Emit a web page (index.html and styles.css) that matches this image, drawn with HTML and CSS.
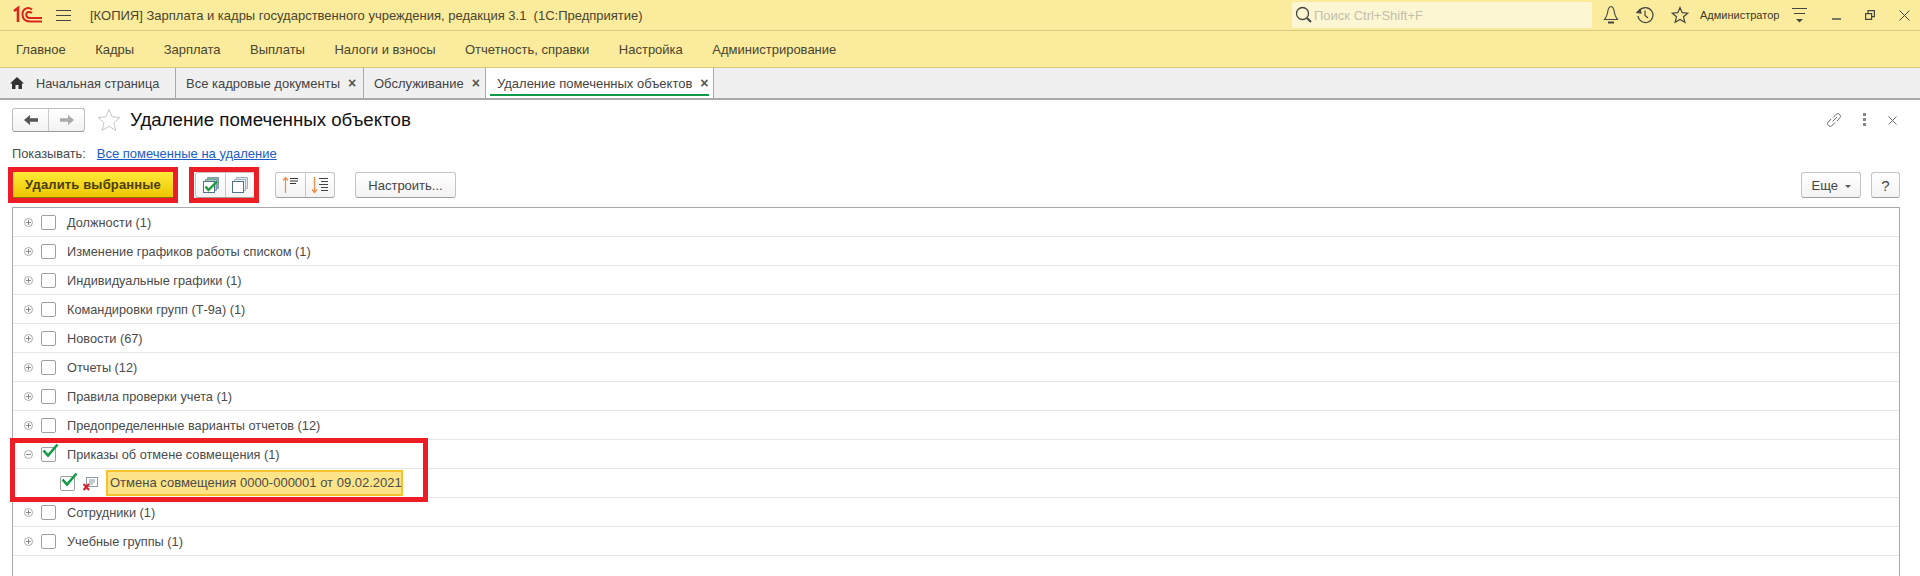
FILE: index.html
```html
<!DOCTYPE html>
<html lang="ru">

<head>
  <meta charset="UTF-8">
  <title>Удаление помеченных объектов</title>
  <link rel="stylesheet" href="styles.css">
</head>

<body>
  <div class="top-bar">
    <svg class="logo" width="30" height="20" viewBox="0 0 30 20" fill="none" stroke="#d9251d">
      <path d="M1 6 L5 3 V17" stroke-width="2.6"/>
      <path d="M19 4.500 C15 1.500 9.500 3.500 9.500 9 C9.500 14 12 16.500 17 16.500 H29" stroke-width="2"/>
      <path d="M19 8 C16.500 6 13.200 7 13.200 9.600 C13.200 12 15 13 17 13 H29" stroke-width="2"/>
    </svg>
    <svg class="burger" width="15" height="13" viewBox="0 0 15 13" stroke="#444" stroke-width="1.2">
      <path d="M0 1.5H15M0 6.5H15M0 11.5H15"/>
    </svg>
    <div class="app-title">[КОПИЯ] Зарплата и кадры государственного учреждения, редакция 3.1&nbsp; (1С:Предприятие)</div>
    <div class="search">
      <svg width="17" height="18" viewBox="0 0 17 18" fill="none" stroke="#444" stroke-width="1.3">
        <circle cx="7.5" cy="7.5" r="6"/>
        <path d="M12 12l4 4" stroke-width="2"/>
      </svg>
      <span>Поиск Ctrl+Shift+F</span>
    </div>
    <div class="top-icons">
      <svg width="16" height="20" viewBox="0 0 16 20" fill="none" stroke="#444" stroke-width="1.1">
        <path d="M8 1.500C5.500 1.500 5 4 4.500 8C4 11 2.500 13 1.500 14.500H14.500C13.500 13 12 11 11.500 8C11 4 10.500 1.500 8 1.500Z"/>
        <path d="M5 17.500H11" stroke-width="2"/>
      </svg>
      <svg width="18" height="18" viewBox="0 0 18 18" fill="none" stroke="#444" stroke-width="1.2">
        <path d="M3.500 4.500A7.500 7.500 0 1 1 2 10"/>
        <path d="M1 6.500L4 3.500L5 7Z" fill="#444"/>
        <path d="M9 4.500V9.500L12 12"/>
      </svg>
      <svg width="18" height="18" viewBox="0 0 18 18" fill="none" stroke="#444" stroke-width="1.2">
        <path d="M9 1.500L11.200 6.700L16.800 7.200L12.500 10.800L13.900 16.300L9 13.400L4.100 16.300L5.500 10.800L1.200 7.200L6.800 6.700Z"/>
      </svg>
    </div>
    <div class="user-name">Администратор</div>
    <svg class="user-menu" width="15" height="16" viewBox="0 0 15 16" stroke="#444" stroke-width="1.2">
      <path d="M0 1.500H15M2 6.500H13"/>
      <path d="M4 12H11L7.500 15.500Z" fill="#444" stroke="none"/>
    </svg>
    <div class="win-icons">
      <svg width="10" height="10" viewBox="0 0 10 10" stroke="#444" stroke-width="1.4"><path d="M1 9H10"/></svg>
      <svg width="10" height="10" viewBox="0 0 10 10" fill="none" stroke="#444" stroke-width="1.2"><path d="M.6 3.600H6.600V9.400H.6ZM3 3.500V.6H9.400V6.600H6.600"/></svg>
      <svg width="11" height="11" viewBox="0 0 11 11" stroke="#444" stroke-width="1"><path d="M.5 .5L10.500 10.500M10.500 .5L.5 10.500"/></svg>
    </div>
  </div>

  <div class="main-menu">
    <a>Главное</a>
    <a>Кадры</a>
    <a>Зарплата</a>
    <a>Выплаты</a>
    <a>Налоги и взносы</a>
    <a>Отчетность, справки</a>
    <a>Настройка</a>
    <a>Администрирование</a>
  </div>

  <div class="tabs">
    <div class="tab tab-home">
      <svg width="14" height="12" viewBox="0 0 14 12" fill="#333"><path d="M7 0L14 6.500H12V12H8.500V8H5.500V12H2V6.500H0Z"/></svg>
      <span>Начальная страница</span>
    </div>
    <div class="tab tab-docs"><span>Все кадровые документы</span><i>×</i></div>
    <div class="tab tab-service"><span>Обслуживание</span><i>×</i></div>
    <div class="tab tab-active"><span>Удаление помеченных объектов</span><i>×</i></div>
  </div>

  <div class="form">
    <div class="form-head">
      <div class="nav-buttons">
        <button>
          <svg width="14" height="10" viewBox="0 0 14 10" fill="#555"><path d="M0 5L6 0V3.300H14V6.700H6V10Z"/></svg>
        </button>
        <button>
          <svg width="14" height="10" viewBox="0 0 14 10" fill="#aaa"><path d="M14 5L8 0V3.300H0V6.700H8V10Z"/></svg>
        </button>
      </div>
      <svg class="fav" width="24" height="24" viewBox="0 0 24 24" fill="#fff" stroke="#c8c8c8" stroke-width="1">
        <path d="M12 1.500L15.100 8.800L23 9.500L17 14.700L18.800 22.400L12 18.300L5.200 22.400L7 14.700L1 9.500L8.900 8.800Z"/>
      </svg>
      <h1>Удаление помеченных объектов</h1>
      <div class="form-tools">
        <svg width="16" height="16" viewBox="0 0 16 16" fill="none" stroke="#666" stroke-width="1">
          <path d="M6.500 9.500L11 5M5 7L2 10.500C.5 12.500 3.500 15.500 5.500 14L9 10.500M7 5.500L10.500 2C12.500 .5 15.500 3.500 14 5.500L11 9"/>
        </svg>
        <svg width="4" height="14" viewBox="0 0 4 14" fill="#888">
          <rect x="0" y="0" width="3" height="3"/><rect x="0" y="5" width="3" height="3"/><rect x="0" y="10" width="3" height="3"/>
        </svg>
        <svg width="9" height="9" viewBox="0 0 9 9" stroke="#666" stroke-width="1"><path d="M.5 .5L8.500 8.500M8.500 .5L.5 8.500"/></svg>
      </div>
    </div>

    <div class="filter-row">
      <span>Показывать:</span>
      <a href="#">Все помеченные на удаление</a>
    </div>

    <div class="command-bar">
      <button class="btn-main">Удалить выбранные</button>
      <div class="btn-group group-check">
        <button>
          <svg width="18" height="18" viewBox="0 0 18 18" fill="none" stroke="#7c9aa8">
            <path d="M5.500 3.500V1.500H16.500V12.500H14.500" fill="#7fb98f"/>
            <path d="M3.500 5.500V3.500H14.500V14.500H12.500" fill="#a5d0ac"/>
            <rect x="1.500" y="5.500" width="11" height="11" fill="#fff" stroke="#4d7388"/>
            <path d="M3.500 10.500L6.500 14L15 5.500" stroke="#1f9a3c" stroke-width="2.4"/>
          </svg>
        </button>
        <button>
          <svg width="18" height="18" viewBox="0 0 18 18" fill="none" stroke="#9fb3bf">
            <path d="M5.500 3.500V1.500H16.500V12.500H14.500" fill="#dfe6ea"/>
            <path d="M3.500 5.500V3.500H14.500V14.500H12.500" fill="#eef2f4"/>
            <rect x="1.500" y="5.500" width="11" height="11" fill="#fff" stroke="#4d7388"/>
          </svg>
        </button>
      </div>
      <div class="btn-group group-sort">
        <button>
          <svg width="18" height="18" viewBox="0 0 18 18" fill="none">
            <path d="M3.500 17V2M1 4.500L3.500 1.500L6 4.500" stroke="#ee8a45" stroke-width="1.2"/>
            <path d="M8 2.500H16M8 5H16M8 7.500H14" stroke="#333" stroke-width="1.2"/>
          </svg>
        </button>
        <button>
          <svg width="18" height="18" viewBox="0 0 18 18" fill="none">
            <path d="M3.500 1V16M1 13.500L3.500 16.500L6 13.500" stroke="#ee8a45" stroke-width="1.2"/>
            <path d="M8 2.500H17M10 5.500H17M8 8.500H17M10 11.500H17M10 14.500H17" stroke="#444" stroke-width="1"/>
          </svg>
        </button>
      </div>
      <button class="btn btn-setup">Настроить...</button>
      <button class="btn btn-more">Еще <b class="caret"></b></button>
      <button class="btn btn-help">?</button>
    </div>

    <div class="tree">
      <div class="row"><b class="exp"></b><b class="chk"></b><span>Должности (1)</span></div>
      <div class="row"><b class="exp"></b><b class="chk"></b><span>Изменение графиков работы списком (1)</span></div>
      <div class="row"><b class="exp"></b><b class="chk"></b><span>Индивидуальные графики (1)</span></div>
      <div class="row"><b class="exp"></b><b class="chk"></b><span>Командировки групп (Т-9а) (1)</span></div>
      <div class="row"><b class="exp"></b><b class="chk"></b><span>Новости (67)</span></div>
      <div class="row"><b class="exp"></b><b class="chk"></b><span>Отчеты (12)</span></div>
      <div class="row"><b class="exp"></b><b class="chk"></b><span>Правила проверки учета (1)</span></div>
      <div class="row"><b class="exp"></b><b class="chk"></b><span>Предопределенные варианты отчетов (12)</span></div>
      <div class="row">
        <b class="exp exp-open"></b>
        <b class="chk"><svg width="17" height="15" viewBox="0 0 17 15" fill="none" stroke="#129a44" stroke-width="2.6"><path d="M1.500 7.500L6 12.500L15.500 1.500"/></svg></b>
        <span>Приказы об отмене совмещения (1)</span>
      </div>
      <div class="row row-child">
        <b class="chk"><svg width="17" height="15" viewBox="0 0 17 15" fill="none" stroke="#129a44" stroke-width="2.6"><path d="M1.500 7.500L6 12.500L15.500 1.500"/></svg></b>
        <svg class="doc-icon" width="15" height="15" viewBox="0 0 15 15" fill="none">
          <rect x="3.500" y="1.500" width="11" height="9" fill="#fff" stroke="#8a9aa5"/>
          <path d="M6 4H12M6 6H12M6 8H10" stroke="#8a9aa5"/>
          <path d="M.5 8L6 14M6 8L.5 14" stroke="#d8202a" stroke-width="2.2"/>
        </svg>
        <span class="selected">Отмена совмещения 0000-000001 от 09.02.2021</span>
      </div>
      <div class="row"><b class="exp"></b><b class="chk"></b><span>Сотрудники (1)</span></div>
      <div class="row"><b class="exp"></b><b class="chk"></b><span>Учебные группы (1)</span></div>
    </div>
  </div>

  <!-- красные рамки поверх скриншота -->
  <div class="mark mark-delete"></div>
  <div class="mark mark-check"></div>
  <div class="mark mark-rows"></div>
</body>

</html>
```

FILE: styles.css
```css
* {
  margin: 0;
  padding: 0;
  box-sizing: border-box;
}

html,
body {
  height: 576px;
  overflow: hidden;
}

body {
  position: relative;
  background: #fff;
  font-family: "Liberation Sans", Arial, sans-serif;
  font-size: 13px;
  color: #4b4b4b;
}

button {
  font-family: inherit;
}

/* верхняя строка */
.top-bar {
  height: 31px;
  display: flex;
  align-items: center;
  background: #fbeb9c;
  border-bottom: 1px solid #d9c97f;
  padding-left: 13px;
}

.burger {
  margin-left: 13px;
}

.app-title {
  margin-left: 19px;
  width: 1202px;
  color: #4a4530;
  font-size: 13px;
}

.search {
  width: 300px;
  height: 26px;
  display: flex;
  align-items: center;
  gap: 2px;
  background: #fdf6d2;
  border-radius: 2px;
  padding-left: 3px;
  color: #c4c0ac;
  font-size: 13px;
}

.top-icons {
  display: flex;
  align-items: center;
  gap: 17px;
  margin-left: 11px;
}

.user-name {
  margin-left: 11px;
  width: 92px;
  font-size: 11px;
  color: #3e3a28;
}

.win-icons {
  display: flex;
  align-items: center;
  gap: 24px;
  margin-left: 24px;
}

.user-menu {
  flex: none;
}

/* меню разделов */
.main-menu {
  height: 37px;
  display: flex;
  align-items: center;
  gap: 29.5px;
  padding-left: 16px;
  background: #fbeb9c;
  border-bottom: 1px solid #d9c97f;
  color: #4a4530;
}

.main-menu a {
  cursor: pointer;
}

/* вкладки */
.tabs {
  height: 32px;
  display: flex;
  background: #f0f0f0;
  border-bottom: 2px solid #a9a9a9;
}

.tab {
  display: flex;
  align-items: center;
  height: 30px;
  border-right: 1px solid #a9a9a9;
  color: #444;
  white-space: nowrap;
}

.tab svg {
  flex: none;
}

.tab i {
  font-style: normal;
  font-weight: bold;
  font-size: 14px;
  color: #555;
  margin-left: 8px;
}

.tab-home {
  width: 176px;
  padding-left: 10px;
  gap: 12px;
  font-size: 12.75px;
}

.tab-docs {
  width: 188px;
  padding-left: 10px;
}

.tab-service {
  width: 122px;
  padding-left: 10px;
}

.tab-active {
  width: 228px;
  padding-left: 11px;
  background: #fff;
  position: relative;
}

.tab-active::after {
  content: "";
  position: absolute;
  left: 4px;
  right: 4px;
  bottom: 2px;
  height: 2px;
  background: #0f9a4a;
}

/* форма */
.form {
  padding: 0 20px 0 12px;
}

.form-head {
  height: 40px;
  display: flex;
  align-items: center;
}

.nav-buttons {
  display: flex;
  width: 73px;
  height: 24px;
  border: 1px solid #bdbdbd;
  border-bottom-color: #9a9a9a;
  border-radius: 3px;
  background: linear-gradient(#fff, #f2f2f2);
}

.nav-buttons button {
  flex: 1;
  border: 0;
  background: none;
}

.nav-buttons button+button {
  border-left: 1px solid #c8c8c8;
}

.fav {
  margin-left: 12px;
}

h1 {
  margin-left: 9px;
  font-size: 18.7px;
  font-weight: normal;
  color: #111;
}

.form-tools {
  margin-left: auto;
  display: flex;
  align-items: center;
  gap: 21px;
  padding-right: 3px;
}

.filter-row {
  height: 26px;
  display: flex;
  align-items: center;
  gap: 11px;
  font-size: 12.8px;
}

.filter-row a {
  color: #1d5cc4;
  font-size: 13px;
}

.command-bar {
  height: 41px;
  display: flex;
  align-items: flex-start;
  padding-top: 6px;
  margin-left: 1px;
}

.btn-main {
  width: 160px;
  height: 26px;
  border: 0;
  border-bottom: 1px solid #8a7300;
  background: linear-gradient(#fdea3a, #eec600);
  color: #4a3d00;
  font-size: 13px;
  font-weight: bold;
  letter-spacing: .15px;
}

.btn-group {
  display: flex;
  height: 26px;
  border: 1px solid #c4c4c4;
  border-bottom-color: #9f9f9f;
  border-radius: 3px;
  background: linear-gradient(#fff, #f3f3f3);
}

.btn-group button {
  width: 29px;
  border: 0;
  background: none;
  display: flex;
  align-items: center;
  justify-content: center;
}

.btn-group button+button {
  border-left: 1px solid #c8c8c8;
}

.group-check {
  margin-left: 22px;
}

.group-sort {
  margin-left: 20px;
}

.btn {
  height: 26px;
  border: 1px solid #c4c4c4;
  border-bottom-color: #9f9f9f;
  border-radius: 3px;
  background: linear-gradient(#fff, #f3f3f3);
  color: #444;
  font-size: 13px;
}

.btn-setup {
  width: 101px;
  margin-left: 20px;
}

.btn-more {
  width: 60px;
  margin-left: auto;
}

.btn-help {
  width: 29px;
  margin-left: 10px;
  font-size: 15px;
}

.caret {
  display: inline-block;
  margin-left: 3px;
  vertical-align: 2px;
  border: 3px solid transparent;
  border-top: 3px solid #555;
  border-bottom: 0;
}

/* дерево */
.tree {
  border-top: 1px solid #a9a9a9;
  border-left: 1px solid #a9a9a9;
  border-right: 1px solid #a9a9a9;
  height: 369px;
  font-size: 12.75px;
}

.row {
  height: 29px;
  display: flex;
  align-items: center;
  padding-left: 11px;
  border-bottom: 1px solid #e6e6e6;
  color: #4b4b4b;
}

.exp {
  flex: none;
  width: 9px;
  height: 9px;
  border: 1px solid #aaa;
  border-radius: 50%;
  background:
    linear-gradient(#888, #888) center / 5px 1px no-repeat,
    linear-gradient(#888, #888) center / 1px 5px no-repeat;
}

.exp-open {
  background: linear-gradient(#888, #888) center / 5px 1px no-repeat;
}

.chk {
  position: relative;
  flex: none;
  width: 15px;
  height: 15px;
  margin-left: 8px;
  margin-right: 11px;
  border: 1px solid #9f9f9f;
  border-radius: 2px;
  background: #fff;
}

.chk svg {
  position: absolute;
  left: 0;
  top: -5px;
}

.row-child {
  padding-left: 39px;
}

.row-child .chk {
  margin-right: 8px;
}

.doc-icon {
  flex: none;
}

.selected {
  margin-left: 8px;
  height: 26px;
  line-height: 22px;
  padding: 0 2px;
  width: 297px;
  background: #fde488;
  border: 2px solid #f6c12d;
  white-space: nowrap;
  font-size: 13px;
}

/* красные рамки */
.mark {
  position: absolute;
  border: 5px solid #ee1c25;
}

.mark-delete {
  left: 8px;
  top: 167px;
  width: 170px;
  height: 36px;
}

.mark-check {
  left: 189px;
  top: 167px;
  width: 70px;
  height: 36px;
}

.mark-rows {
  left: 10px;
  top: 438px;
  width: 418px;
  height: 64px;
}
```
